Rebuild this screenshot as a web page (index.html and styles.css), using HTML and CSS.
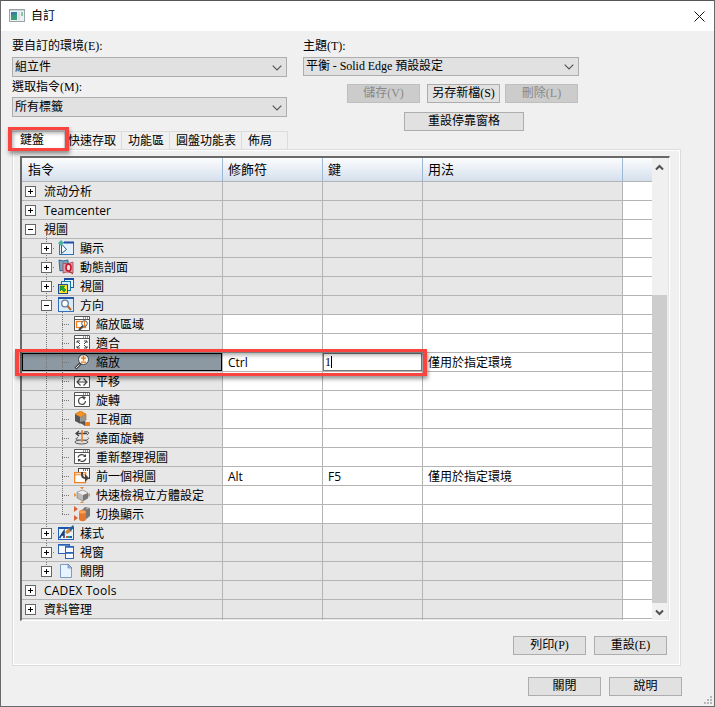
FILE: index.html
```html
<!DOCTYPE html>
<html lang="zh-Hant">
<head>
<meta charset="utf-8">
<title>自訂</title>
<link rel="stylesheet" href="styles.css">
</head>
<body>
<div class="window">
  <header class="titlebar">
    <svg class="app-icon" width="16" height="14" viewBox="0 0 16 14"><rect x=".5" y=".5" width="15" height="12" fill="#eef1f3" stroke="#9aa3aa"/><rect x="1" y="1" width="14" height="1" fill="#ccd4da"/><rect x="2" y="3" width="6" height="8" fill="#397f9b"/><path d="M2 7l6-2v6H2z" fill="#3c9c78"/><rect x="9" y="3" width="2" height="8" fill="#dbe2e7"/><rect x="12" y="3" width="2" height="4" fill="#8dc6a5"/></svg>
    <span class="title">自訂</span>
    <svg class="close" width="11" height="11" viewBox="0 0 11 11"><path d="M.5.5l10 10M10.500.5l-10 10" stroke="#111" fill="none"/></svg>
  </header>
  <section class="settings">
    <div class="left">
      <label>要自訂的環境(E):</label>
      <div class="combo">組立件<svg width="10" height="6"><path d="M.7.7L5 5 9.300.7"/></svg></div>
      <label class="second">選取指令(M):</label>
      <div class="combo">所有標籤<svg width="10" height="6"><path d="M.7.7L5 5 9.300.7"/></svg></div>
    </div>
    <div class="right">
      <label>主題(T):</label>
      <div class="combo">平衡 - Solid Edge 預設設定<svg width="10" height="6"><path d="M.7.7L5 5 9.300.7"/></svg></div>
      <div class="theme-buttons"><button class="off">儲存(V)</button><button>另存新檔(S)</button><button class="off">刪除(L)</button></div>
      <button class="dock">重設停靠窗格</button>
    </div>
  </section>
  <nav class="tabs">
    <div class="tab active">鍵盤</div><div class="tab t2">快速存取</div><div class="tab t3">功能區</div><div class="tab t4">圓盤功能表</div><div class="tab t5">佈局</div>
  </nav>
  <section class="panel">
    <div class="list">
      <div class="table">
        <div class="row head"><div>指令</div><div>修飾符</div><div>鍵</div><div>用法</div><div></div></div>
        <div class="row"><div><i class="box plus"></i><span>流动分析</span></div><div></div><div></div><div></div><div></div></div>
        <div class="row"><div><i class="box plus"></i><span>Teamcenter</span></div><div></div><div></div><div></div><div></div></div>
        <div class="row"><div class="stem"><i class="box"></i><span>視圖</span></div><div></div><div></div><div></div><div></div></div>
        <div class="row l2"><div><i class="box plus"></i><svg class="ic" viewBox="0 0 16 16"><rect x="1.500" y="2.500" width="14" height="12" fill="#e4f1fc" stroke="#2f73b8"/><path d="M6 2.500h10" stroke="#1d4ea8" stroke-width="2"/><path d="M3.500 3v10.500L8.500 9.500 4 4.500" fill="#fff" stroke="#245d8c"/><path d="M0 3l3-3 3 3-3 3z" fill="#4cb59b"/></svg><span>顯示</span></div><div></div><div></div><div></div><div></div></div>
        <div class="row l2"><div><i class="box plus"></i><svg class="ic" viewBox="0 0 16 16"><path d="M1 1l4 1 5-1v11l-4-1-4 1z" fill="#7fa5bd" stroke="#356b91"/><path d="M5 4l4 1 6-2v11l-6-1-4 1z" fill="#dfa1aa" stroke="#a93d4b" stroke-width=".8"/><ellipse cx="10.500" cy="8.500" rx="2.500" ry="3.500" fill="#f8dddd" stroke="#c5172c" stroke-width="1.600"/><path d="M11 12l4 3" stroke="#b01c2b"/></svg><span>動態剖面</span></div><div></div><div></div><div></div><div></div></div>
        <div class="row l2"><div><i class="box plus"></i><svg class="ic" viewBox="0 0 16 16"><rect x="6.500" y=".5" width="9" height="9" fill="#e7f4ff" stroke="#2558ad"/><path d="M6 1h10" stroke="#1749a2" stroke-width="2"/><rect x="3.500" y="3.500" width="9" height="9" fill="#d0f2fa" stroke="#1676a6"/><rect x=".5" y="6.500" width="9" height="9" fill="#ffe51c" stroke="#244a8a"/><path d="M2 8h5L5.500 9.500 8 12l-2 2-2.500-2.500L2 13z" fill="#1fa536" stroke="#155f2b" stroke-width=".5"/></svg><span>視圖</span></div><div></div><div></div><div></div><div></div></div>
        <div class="row l2 open"><div><i class="box"></i><svg class="ic" viewBox="0 0 16 16"><rect x=".5" y=".5" width="15" height="14" fill="#d8ebfb" stroke="#3270bd"/><path d="M0 1h16" stroke="#2457a9" stroke-width="2"/><circle cx="7" cy="6.500" r="3.300" fill="#fafdff" stroke="#647b8f" stroke-width="1.300"/><path d="M9.500 9l3.500 4" stroke="#b36c32" stroke-width="2"/></svg><span>方向</span></div><div></div><div></div><div></div><div></div></div>
        <div class="row l3"><div><svg class="ic" viewBox="0 0 16 16"><path class="frame" d="M.5.5h15v14H.5zM1 3.500h14"/><path class="dots" d="M9 2h1M11 2h1M13 2h1"/><rect x="2.500" y="5.500" width="9" height="6" fill="none" stroke="#f08021" stroke-width="1.300"/><circle cx="10.500" cy="7.500" r="2.800" fill="#fff" stroke="#555"/><path d="M10.500 5v5" stroke="#ef7c19"/><path d="M9 10l-4 4" stroke="#444" stroke-width="2"/></svg><span>縮放區域</span></div><div></div><div></div><div></div><div></div></div>
        <div class="row l3"><div><svg class="ic" viewBox="0 0 16 16"><path class="frame" d="M.5.5h15v14H.5zM1 3.500h14"/><path class="dots" d="M9 2h1M11 2h1M13 2h1"/><path d="M3 8V6h3M3 6l3 3M13 8V6h-3M13 6l-3 3M3 11v2h3M3 13l3-3M13 11v2h-3M13 13l-3-3" fill="none" stroke="#444"/></svg><span>適合</span></div><div></div><div></div><div></div><div></div></div>
        <div class="row l3 selected"><div><svg class="ic" viewBox="0 0 16 16"><path d="M7 9l-5.500 5.500" stroke="#444" stroke-width="3"/><path d="M5.500 10.500l-3.500 3.500" stroke="#eee"/><circle cx="9.500" cy="5.500" r="5" fill="#fff8ed" stroke="#444"/><path d="M7 4.200h5M9.500 1.700v5M7 8.200h5" stroke="#ed780e" stroke-width="1.300"/></svg><span>縮放</span></div><div>Ctrl</div><div class="edit">1<b></b></div><div>僅用於指定環境</div><div></div></div>
        <div class="row l3"><div><svg class="ic" viewBox="0 0 16 16"><path class="frame" d="M.5.5h15v14H.5zM1 3.500h14"/><path class="dots" d="M9 2h1M11 2h1M13 2h1"/><path d="M6.500 5.500L3 9l3.500 3.500M9.500 5.500L13 9l-3.500 3.500M4 9h8" fill="none" stroke="#444" stroke-width="1.200"/></svg><span>平移</span></div><div></div><div></div><div></div><div></div></div>
        <div class="row l3"><div><svg class="ic" viewBox="0 0 16 16"><path class="frame" d="M.5.5h15v14H.5zM1 3.500h14"/><path class="dots" d="M9 2h1M11 2h1M13 2h1"/><path d="M10 6a3.500 3.500 0 1 0 1.500 3" fill="none" stroke="#444" stroke-width="1.200"/><path d="M8 4l4 1-2 3z" fill="#444"/></svg><span>旋轉</span></div><div></div><div></div><div></div><div></div></div>
        <div class="row l3"><div><svg class="ic" viewBox="0 0 16 16"><path d="M1 3l5.500-3L12 3 6.500 6z" fill="#f7941f"/><path d="M1 3l5.500 3v7L1 10z" fill="#555"/><path d="M12 3v7l-5.500 3V6z" fill="#969696"/><path d="M11 11h5v4h-5z" fill="#ef7e1e"/><path d="M5 11l6 4v-5z" fill="#555"/><path d="M1 3l5.500-3L12 3v6M1 3l5.500 3L12 3" stroke="#c9660b" stroke-width=".6" fill="none"/></svg><span>正視面</span></div><div></div><div></div><div></div><div></div></div>
        <div class="row l3"><div><svg class="ic" viewBox="0 0 16 16"><path d="M2 3.500h11M5 1L2 3.500 5 6" stroke="#444" stroke-width="1.300" fill="none"/><path d="M4 7.500c-5 2 0 3 4 3s8-1 6-3" stroke="#555" fill="none"/><ellipse cx="7.500" cy="12" rx="6.500" ry="2" fill="#ddd" stroke="#555"/><path d="M8 0v12" stroke="#ed7d1c" stroke-width="1.500"/><path d="M10 2c5-1 6 1 3 3" stroke="#444" fill="none"/></svg><span>繞面旋轉</span></div><div></div><div></div><div></div><div></div></div>
        <div class="row l3"><div><svg class="ic" viewBox="0 0 16 16"><path class="frame" d="M.5.5h15v14H.5zM1 3.500h14"/><path class="dots" d="M9 2h1M11 2h1M13 2h1"/><path d="M4 8.500c1-3 5-4 7-1.500M12 9.500c-1 3-5 4-7 1.500" fill="none" stroke="#444" stroke-width="1.200"/><path d="M12 5v3H9zM4 13v-3h3z" fill="#444"/></svg><span>重新整理視圖</span></div><div></div><div></div><div></div><div></div></div>
        <div class="row l3"><div><svg class="ic" viewBox="0 0 16 16"><rect x="4.500" y=".5" width="11" height="10" fill="#fff" stroke="#444"/><path d="M9 2h6" stroke="#444" stroke-width="1.500" stroke-dasharray="1 1"/><rect x=".6" y="4.600" width="11" height="10" fill="#fff" stroke="#f08428" stroke-width="1.300"/><path d="M1 6.800h10" stroke="#f08428"/><path d="M8 4v3c0 3 2 3 4 3" stroke="#444" stroke-width="2" fill="none"/><path d="M15 10l-4-4v8z" fill="#444"/></svg><span>前一個視圖</span></div><div>Alt</div><div>F5</div><div>僅用於指定環境</div><div></div></div>
        <div class="row l3"><div><svg class="ic" viewBox="0 0 16 16"><path d="M3 5l6-2 5 3-5 2z" fill="#eee"/><path d="M3 5l6 3v6l-6-3z" fill="#bbb"/><path d="M9 8l5-2v5l-5 3z" fill="#777"/><path d="M6 0h4L8 2.500zM0 6v4l2.500-2zM16 6v4l-2-2zM6 16h4l-2-2z" fill="#ee8b31"/><path d="M3 5l6-2 5 3v5l-5 3-6-3z" fill="none" stroke="#777" stroke-width=".6"/></svg><span>快速檢視立方體設定</span></div><div></div><div></div><div></div><div></div></div>
        <div class="row l3 last"><div><svg class="ic" viewBox="0 0 16 16"><path d="M0 0l4 3-4 3zM0 9l4 3-4 3z" fill="#d96536"/><path d="M8 4l3-3 5 1v8l-5 4z" fill="#777"/><path d="M5 6c0-3 7-3 7 0v7c0 3-7 3-7 0z" fill="#e6782b"/><ellipse cx="8.500" cy="6" rx="3.200" ry="1.500" fill="#ffa257"/><path d="M12 3l3-1" stroke="#bbb"/></svg><span>切換顯示</span></div><div></div><div></div><div></div><div></div></div>
        <div class="row l2"><div><i class="box plus"></i><svg class="ic" viewBox="0 0 16 16"><rect x=".5" y="2.500" width="15" height="12" fill="#e6f2ff" stroke="#285fbb"/><path d="M0 3h16" stroke="#1c55b4" stroke-width="2"/><path d="M1.500 13L6 6v7M3 10h3" stroke="#123c7c" stroke-width="1.500" fill="none"/><path d="M7 7l4-4 3 3-5 3z" fill="#c88642"/><path d="M11 4l4-4 1 2-3 4z" fill="#245f94"/><path d="M8 12h2" stroke="#e44" stroke-width="2"/><path d="M10 12h2" stroke="#2a4" stroke-width="2"/><path d="M12 12h2" stroke="#25c" stroke-width="2"/></svg><span>樣式</span></div><div></div><div></div><div></div><div></div></div>
        <div class="row l2"><div><i class="box plus"></i><svg class="ic" viewBox="0 0 16 16"><g fill="#f4faff" stroke="#2c63b5"><rect x=".5" y=".5" width="11" height="9"/><rect x="7.500" y="2.500" width="8" height="6"/><rect x="7.500" y="8.500" width="8" height="6"/></g><path d="M0 1h12M7 3h9M7 9h9" stroke="#2c63b5" stroke-width="1.500"/></svg><span>視窗</span></div><div></div><div></div><div></div><div></div></div>
        <div class="row l2 end"><div><i class="box plus"></i><svg class="ic" viewBox="0 0 16 16"><path d="M2.500 1.500h8l3 3v10h-11z" fill="#e7f3ff" stroke="#7f9cc3"/><path d="M10 1v4h4z" fill="#a8bfdf" stroke="#6782b0" stroke-width=".7"/></svg><span>關閉</span></div><div></div><div></div><div></div><div></div></div>
        <div class="row"><div><i class="box plus"></i><span class="wide">CADEX Tools</span></div><div></div><div></div><div></div><div></div></div>
        <div class="row"><div><i class="box plus"></i><span>資料管理</span></div><div></div><div></div><div></div><div></div></div>
        <div class="row"><div></div><div></div><div></div><div></div><div></div></div>
      </div>
      <div class="scroll"><svg width="9" height="7"><path d="M1 5.500L4.500 2 8 5.500"/></svg><div class="thumb"></div><svg width="9" height="7"><path d="M1 1.500L4.500 5 8 1.500"/></svg></div>
    </div>
    <div class="panel-buttons"><button>列印(P)</button><button>重設(E)</button></div>
  </section>
  <footer><button>關閉</button><button>說明</button></footer>
  <div class="mark mark-tab"></div>
  <div class="mark mark-row"></div>
  <svg class="grip" width="9" height="9" fill="#b8b8b8"><path d="M7 0h2v2H7zM4 3h2v2H4zM7 3h2v2H7zM1 6h2v2H1zM4 6h2v2H4zM7 6h2v2H7z"/></svg>
</div>
</body>
</html>
```
FILE: styles.css
```css
* { box-sizing: border-box; }
body { margin: 0; overflow: hidden; font: 12px/16px "Open Sans", "Noto Sans CJK TC", sans-serif; color: #000; }
.window { position: relative; width: 715px; height: 707px; background: #f0f0f0; border: 1px solid #69696b; border-top-color: #55575b; }
.titlebar { display: flex; align-items: center; height: 30px; padding: 0 9px 0 8px; background: #fff; }
.title { margin-left: 6px; flex: 1; }
.settings { display: flex; gap: 16px; height: 100px; padding: 7px 0 0 11px; font-family: "Liberation Serif", "Noto Sans CJK TC", serif; }
.left { width: 275px; }
.right { width: 276px; display: flex; flex-direction: column; }
label { display: block; height: 19px; line-height: 17px; white-space: nowrap; }
.second { height: 20px; line-height: 20px; }
.combo { height: 20px; display: flex; align-items: center; justify-content: space-between; padding: 0 4px 0 2px; background: #e1e1e1; border: 1px solid #adadad; white-space: pre; }
.right .combo { letter-spacing: -.05px; }
.combo svg { fill: none; stroke: #555; stroke-width: 1.2; margin-top: 2px; }
button { width: 73px; height: 19px; padding: 0; display: block; border: 1px solid #adadad; background: #e1e1e1; color: #000; font: 12px/15px "Liberation Serif", "Noto Sans CJK TC", serif; white-space: nowrap; }
.off { background: #ccc; border-color: #bfbfbf; color: #888; }
.theme-buttons { display: flex; padding: 8px 0 0 44px; }
.theme-buttons button:nth-child(2) { margin: 0 5px 0 7px; }
.dock { width: 120px; margin: 9px 0 0 101px; }
.tabs { display: flex; height: 18px; padding-left: 11px; }
.tab { border: 1px solid #dcdcdc; border-width: 1px 1px 0 0; line-height: 18px; white-space: nowrap; }
.active { width: 53px; padding-left: 8px; background: #fff; line-height: 15px; }
.t2 { width: 57px; padding-left: 3px; }
.t3 { width: 48px; padding-left: 6px; }
.t4 { width: 72px; padding-left: 6px; }
.t5 { width: 46px; padding-left: 6px; }
.panel { width: 669px; height: 517px; margin-left: 11px; border: 1px solid #dcdcdc; box-shadow: inset 0 0 0 1px #fff; padding: 6px 0 0 7px; }
.list { display: flex; width: 650px; height: 465px; border: solid; border-width: 2px 1px 1px 2px; border-color: #696969 #fff #fff #696969; }
.table { width: 630px; overflow: hidden; background: #fff; }
.row { display: grid; grid-template-columns: 201px 100px 100px 200px 29px; height: 19px; }
.row > div { height: 19px; border-right: 1px solid #b4b4b4; border-bottom: 1px solid #b4b4b4; background: #e7e7e7; padding-left: 5px; line-height: 20px; white-space: nowrap; overflow: hidden; }
.row > div:first-child { display: flex; align-items: center; padding-left: 3px; }
.row > div:last-child { border-right: 0; background: #fff; }
.row span { padding-top: 1px; line-height: 17px; }
.head, .head > div { height: 24px; }
.head > div, .head > div:last-child { background: linear-gradient(#fbfdfe, #d5dfec); border-right-color: #9db8d3; font-size: 13px; line-height: 23px; }
.row.head > div:first-child { padding-left: 6px; }
.box { width: 11px; height: 11px; margin-right: 8px; flex: none; border: 1px solid #666; background: linear-gradient(#000, #000) center / 5px 1px no-repeat #fff; }
.plus { background: linear-gradient(#000, #000) center / 5px 1px no-repeat, linear-gradient(#000, #000) center / 1px 5px no-repeat, #fff; }
.wide { letter-spacing: .2px; }
.ic { width: 16px; height: 16px; flex: none; margin-right: 6px; }
.frame { fill: #fff; stroke: #555; }
.dots { stroke: #333; fill: none; }
.row > .stem { background: repeating-linear-gradient(#888 0 1px, #e7e7e7 1px 2px) 24px 15px / 1px 4px no-repeat #e7e7e7; }
.l2 > div:first-child { padding-left: 19px !important; background: repeating-linear-gradient(#777 0 1px, transparent 1px 2px) 24px 0 / 1px 19px no-repeat, linear-gradient(#777, #777) 31px 9px / 1px 1px no-repeat, #e7e7e7; }
.l2 .box { margin-right: 6px; }
.open > div:first-child { background: repeating-linear-gradient(#777 0 1px, transparent 1px 2px) 24px 0 / 1px 19px no-repeat, repeating-linear-gradient(#777 0 1px, transparent 1px 2px) 40px 16px / 1px 3px no-repeat, #e7e7e7; }
.end > div:first-child { background: repeating-linear-gradient(#777 0 1px, transparent 1px 2px) 24px 0 / 1px 9px no-repeat, #e7e7e7; }
.l3 > div { background: #fff; }
.row.l3 > div:first-child { padding-left: 52px; background: repeating-linear-gradient(#777 0 1px, transparent 1px 2px) 24px 0 / 1px 19px no-repeat, repeating-linear-gradient(#777 0 1px, transparent 1px 2px) 40px 0 / 1px 19px no-repeat, repeating-linear-gradient(90deg, #777 0 1px, transparent 1px 2px) 40px 9px / 7px 1px no-repeat, #e7e7e7; }
.row.last > div:first-child { background-size: 1px 19px, 1px 9px, 7px 1px, auto; }
.row.selected > div:first-child { background-color: #8c98a2; box-shadow: inset 0 0 0 1px #000; }
.row > .edit { padding-left: 2px; box-shadow: inset 0 0 0 1px #777; display: flex; align-items: center; font-family: "Liberation Serif", serif; }
.edit b { width: 1px; height: 12px; background: #000; }
.scroll { width: 17px; padding-right: 1px; border-right: 1px solid #e3e3e3; display: flex; flex-direction: column; align-items: center; background: #f0f0f0; }
.scroll svg { margin: 6px 0 0; flex: none; fill: none; stroke: #505050; stroke-width: 2; }
.thumb { width: 15px; height: 308px; flex: none; margin-top: 124px; background: #cdcdcd; }
.panel-buttons { display: flex; gap: 8px; padding: 15px 0 0 493px; }
footer { display: flex; gap: 8px; padding: 11px 0 0 527px; }
.mark { position: absolute; border: solid #f94440; border-width: 3px 4px; box-shadow: 1px 3px 4px rgba(0,0,0,.4), inset 1px 3px 4px rgba(0,0,0,.35); }
.mark-tab { left: 7px; top: 126px; width: 61px; height: 24px; }
.mark-row { left: 14px; top: 348px; width: 412px; height: 27px; }
.grip { position: absolute; right: 2px; bottom: 1px; }
```
